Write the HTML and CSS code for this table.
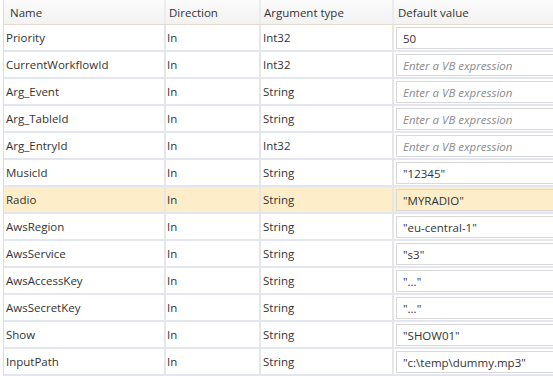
FILE: index.html
```html
<!DOCTYPE html>
<html>
<head>
<meta charset="utf-8">
<link rel="stylesheet" href="styles.css">
</head>
<body>
<div class="grid">
  <div class="row head">
    <div class="cell c1">Name</div>
    <div class="cell c2">Direction</div>
    <div class="cell c3">Argument type</div>
    <div class="cell c4">Default value</div>
  </div>
  <div class="row"><div class="cell c1">Priority</div><div class="cell c2">In</div><div class="cell c3">Int32</div><div class="cell c4"><div class="box">50</div></div></div>
  <div class="row"><div class="cell c1">CurrentWorkflowId</div><div class="cell c2">In</div><div class="cell c3">Int32</div><div class="cell c4"><div class="box ph">Enter a VB expression</div></div></div>
  <div class="row"><div class="cell c1">Arg_Event</div><div class="cell c2">In</div><div class="cell c3">String</div><div class="cell c4"><div class="box ph">Enter a VB expression</div></div></div>
  <div class="row"><div class="cell c1">Arg_TableId</div><div class="cell c2">In</div><div class="cell c3">String</div><div class="cell c4"><div class="box ph">Enter a VB expression</div></div></div>
  <div class="row"><div class="cell c1">Arg_EntryId</div><div class="cell c2">In</div><div class="cell c3">Int32</div><div class="cell c4"><div class="box ph">Enter a VB expression</div></div></div>
  <div class="row"><div class="cell c1">MusicId</div><div class="cell c2">In</div><div class="cell c3">String</div><div class="cell c4"><div class="box">"12345"</div></div></div>
  <div class="row sel"><div class="cell c1">Radio</div><div class="cell c2">In</div><div class="cell c3">String</div><div class="cell c4"><div class="box">"MYRADIO"</div></div></div>
  <div class="row"><div class="cell c1">AwsRegion</div><div class="cell c2">In</div><div class="cell c3">String</div><div class="cell c4"><div class="box">"eu-central-1"</div></div></div>
  <div class="row"><div class="cell c1">AwsService</div><div class="cell c2">In</div><div class="cell c3">String</div><div class="cell c4"><div class="box">"s3"</div></div></div>
  <div class="row"><div class="cell c1">AwsAccessKey</div><div class="cell c2">In</div><div class="cell c3">String</div><div class="cell c4"><div class="box">"..."</div></div></div>
  <div class="row"><div class="cell c1">AwsSecretKey</div><div class="cell c2">In</div><div class="cell c3">String</div><div class="cell c4"><div class="box">"..."</div></div></div>
  <div class="row"><div class="cell c1">Show</div><div class="cell c2">In</div><div class="cell c3">String</div><div class="cell c4"><div class="box">"SHOW01"</div></div></div>
  <div class="row"><div class="cell c1">InputPath</div><div class="cell c2">In</div><div class="cell c3">String</div><div class="cell c4"><div class="box">"c:\temp\dummy.mp3"</div></div></div>
</div>
</body>
</html>
```
FILE: styles.css
```css
html, body {
  margin: 0;
  padding: 0;
  background: #ffffff;
  overflow: hidden;
}
body {
  font-family: "Open Sans", "Noto Sans", sans-serif;
  font-size: 11.5px;
  color: #333333;
}
.grid {
  margin-left: 3px;
  border-left: 1px solid #dcdcdc;
  display: flex;
  flex-direction: column;
}
.row {
  display: grid;
  grid-template-columns: 162px 95px 133px 1fr;
  height: 27px;
  box-sizing: border-box;
  border-bottom: 2px solid #e3e6ee;
}
.row.head {
  height: 25px;
  background: linear-gradient(#fbfbfb, #f2f2f2);
  border-bottom: 1px solid #e2dccf;
  color: #333;
}
.row.sel {
  background: #fdedc8;
}
.cell {
  display: flex;
  align-items: center;
  box-sizing: border-box;
  border-right: 2px solid #e6e6e6;
  white-space: nowrap;
  overflow: hidden;
  min-width: 0;
}
.head .cell { border-right: 2px solid #ececec; }
.c1 { padding-left: 2px; }
.head .c1 { padding-left: 6px; }
.c2 { padding-left: 1px; }
.head .c2 { padding-left: 3px; }
.c3 { padding-left: 2px; }
.head .c3 { padding-left: 3px; }
.c4 { padding: 2px 0 1px 2px; align-items: stretch; border-right: none; }
.head .c4 { padding: 0 0 0 4px; align-items: center; border-right: none; }
.box {
  flex: 1 0 auto;
  margin-right: -4px;
  display: flex;
  align-items: center;
  padding-left: 6px;
  border: 1px solid #d8d8d8;
  background: transparent;
}
.box.ph {
  font-style: italic;
  color: #8a8a8a;
}
```
